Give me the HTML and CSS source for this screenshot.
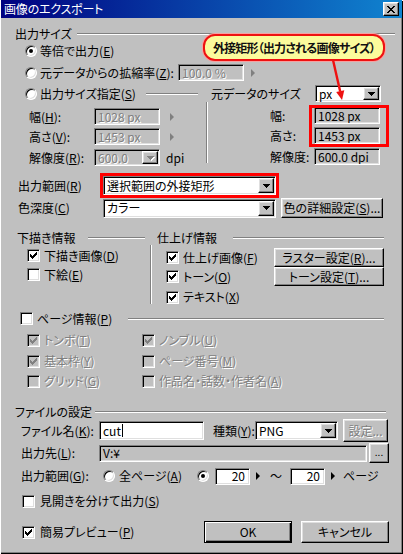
FILE: index.html
```html
<!DOCTYPE html>
<html lang="ja">
<head>
<meta charset="utf-8">
<title>画像のエクスポート</title>
<link rel="stylesheet" href="styles.css">
</head>
<body>
<div class="window">
  <div class="titlebar">
    <span class="title">画像のエクスポート</span>
    <span class="closebtn raised"><svg class="xicon" width="8" height="7" viewBox="0 0 8 7"><path d="M0 0h2v1H0zM6 0h2v1H6zM1 1h2v1H1zM5 1h2v1H5zM2 2h4v1H2zM3 3h2v1H3zM2 4h4v1H2zM1 5h2v1H1zM5 5h2v1H5zM0 6h2v1H0zM6 6h2v1H6z"/></svg></span>
  </div>

  <div class="content">
    <div class="row r-head1"><span class="gl gl-size">出力サイズ</span><span class="etch"></span></div>

    <div class="row r-radio1"><span class="radio on"></span><span class="rl">等倍で出力(<u>E</u>)</span></div>

    <div class="row r-radio2">
      <span class="radio"></span><span class="rl lab-scale">元データからの拡縮率(<u>Z</u>):</span>
      <span class="field sunken dis w-66 h-17">100.0 %</span>
      <span class="tri tri-dis tri-scale"></span>
    </div>

    <div class="row r-row3">
      <span class="radio"></span><span class="rl lab-spec">出力サイズ指定(<u>S</u>)</span>
      <span class="etch etch-spec"></span>
      <span class="lab-orig">元データのサイズ</span>
      <span class="combo sunken w-66 h-17"><span class="ctext">px</span><span class="cbtn raised"><svg class="dda" width="7" height="4" viewBox="0 0 7 4"><path d="M0 0h7v1H0zM1 1h5v1H1zM2 2h3v1H2zM3 3h1v1H3z"/></svg></span></span>
    </div>

    <div class="sub">
      <div class="sub-left">
        <div class="row srow s1"><span class="slab">幅(<u>H</u>):</span><span class="field sunken dis w-66 h-17">1028 px</span><span class="tri tri-dis tri-sub"></span></div>
        <div class="row srow s2"><span class="slab">高さ(<u>V</u>):</span><span class="field sunken dis w-66 h-17">1453 px</span><span class="tri tri-dis tri-sub"></span></div>
        <div class="row srow s3"><span class="slab">解像度(<u>R</u>):</span><span class="combo sunken dis w-66 h-17"><span class="ctext">600.0</span><span class="cbtn raised"><svg class="dda" width="7" height="4" viewBox="0 0 7 4"><path d="M0 0h7v1H0zM1 1h5v1H1zM2 2h3v1H2zM3 3h1v1H3z"/></svg></span></span><span class="dpi">dpi</span></div>
      </div>
      <div class="vline vline-sub"></div>
      <div class="sub-right">
        <div class="row srow s1r"><span class="rlab">幅:</span><span class="field sunken ro w-66 h-17">1028 px</span></div>
        <div class="row srow s2"><span class="rlab">高さ:</span><span class="field sunken ro w-66 h-17">1453 px</span></div>
        <div class="row srow s3"><span class="rlab">解像度:</span><span class="field sunken ro w-66 h-17">600.0 dpi</span></div>
      </div>
    </div>

    <div class="row r-range">
      <span class="lab-range">出力範囲(<u>R</u>)</span>
      <span class="redbox"><span class="combo sunken w-173 h-19"><span class="ctext">選択範囲の外接矩形</span><span class="cbtn raised"><svg class="dda" width="7" height="4" viewBox="0 0 7 4"><path d="M0 0h7v1H0zM1 1h5v1H1zM2 2h3v1H2zM3 3h1v1H3z"/></svg></span></span></span>
    </div>

    <div class="row r-depth">
      <span class="lab-depth">色深度(<u>C</u>)</span>
      <span class="combo sunken w-173 h-19"><span class="ctext">カラー</span><span class="cbtn raised"><svg class="dda" width="7" height="4" viewBox="0 0 7 4"><path d="M0 0h7v1H0zM1 1h5v1H1zM2 2h3v1H2zM3 3h1v1H3z"/></svg></span></span>
      <span class="btn raised btn-color">色の詳細設定(<u>S</u>)...</span>
    </div>

    <div class="row r-head2">
      <span class="gl gl-draft">下描き情報</span><span class="etch etch-draft"></span>
      <span class="gl gl-fin">仕上げ情報</span><span class="etch"></span>
    </div>

    <div class="block2">
      <div class="b2-left">
        <div class="row crow"><span class="chk"><svg class="ck" width="7" height="7" viewBox="0 0 7 7"><path d="M6 0h1v1H6zM5 1h2v1H5zM0 2h1v1H0zM4 2h3v1H4zM0 3h2v1H0zM3 3h3v1H3zM0 4h5v1H0zM1 5h3v1H1zM2 6h1v1H2z"/></svg></span><span class="cl">下描き画像(<u>D</u>)</span></div>
        <div class="row crow"><span class="chk"></span><span class="cl">下絵(<u>E</u>)</span></div>
      </div>
      <div class="vline vline-b2"></div>
      <div class="b2-right">
        <div class="row crow"><span class="chk"><svg class="ck" width="7" height="7" viewBox="0 0 7 7"><path d="M6 0h1v1H6zM5 1h2v1H5zM0 2h1v1H0zM4 2h3v1H4zM0 3h2v1H0zM3 3h3v1H3zM0 4h5v1H0zM1 5h3v1H1zM2 6h1v1H2z"/></svg></span><span class="cl lab-fin">仕上げ画像(<u>F</u>)</span><span class="btn raised btn-set">ラスター設定(<u>R</u>)...</span></div>
        <div class="row crow"><span class="chk"><svg class="ck" width="7" height="7" viewBox="0 0 7 7"><path d="M6 0h1v1H6zM5 1h2v1H5zM0 2h1v1H0zM4 2h3v1H4zM0 3h2v1H0zM3 3h3v1H3zM0 4h5v1H0zM1 5h3v1H1zM2 6h1v1H2z"/></svg></span><span class="cl lab-fin">トーン(<u>O</u>)</span><span class="btn raised btn-set">トーン設定(<u>T</u>)...</span></div>
        <div class="row crow crow-text"><span class="chk"><svg class="ck" width="7" height="7" viewBox="0 0 7 7"><path d="M6 0h1v1H6zM5 1h2v1H5zM0 2h1v1H0zM4 2h3v1H4zM0 3h2v1H0zM3 3h3v1H3zM0 4h5v1H0zM1 5h3v1H1zM2 6h1v1H2z"/></svg></span><span class="cl">テキスト(<u>X</u>)</span></div>
      </div>
    </div>

    <div class="row r-page"><span class="chk"></span><span class="cl lab-page">ページ情報(<u>P</u>)</span><span class="etch"></span></div>

    <div class="row r-dis r-dis1">
      <span class="chk dis"><svg class="ck" width="7" height="7" viewBox="0 0 7 7"><path d="M6 0h1v1H6zM5 1h2v1H5zM0 2h1v1H0zM4 2h3v1H4zM0 3h2v1H0zM3 3h3v1H3zM0 4h5v1H0zM1 5h3v1H1zM2 6h1v1H2z"/></svg></span><span class="cl dtext lab-dis">トンボ(<u>T</u>)</span>
      <span class="chk dis"><svg class="ck" width="7" height="7" viewBox="0 0 7 7"><path d="M6 0h1v1H6zM5 1h2v1H5zM0 2h1v1H0zM4 2h3v1H4zM0 3h2v1H0zM3 3h3v1H3zM0 4h5v1H0zM1 5h3v1H1zM2 6h1v1H2z"/></svg></span><span class="cl dtext">ノンブル(<u>U</u>)</span>
    </div>
    <div class="row r-dis r-dis2">
      <span class="chk dis"><svg class="ck" width="7" height="7" viewBox="0 0 7 7"><path d="M6 0h1v1H6zM5 1h2v1H5zM0 2h1v1H0zM4 2h3v1H4zM0 3h2v1H0zM3 3h3v1H3zM0 4h5v1H0zM1 5h3v1H1zM2 6h1v1H2z"/></svg></span><span class="cl dtext lab-dis">基本枠(<u>Y</u>)</span>
      <span class="chk dis"></span><span class="cl dtext">ページ番号(<u>M</u>)</span>
    </div>
    <div class="row r-dis r-dis3">
      <span class="chk dis"></span><span class="cl dtext lab-dis">グリッド(<u>G</u>)</span>
      <span class="chk dis"></span><span class="cl dtext">作品名・話数・作者名(<u>A</u>)</span>
    </div>

    <div class="row r-head3"><span class="gl gl-file">ファイルの設定</span><span class="etch"></span></div>

    <div class="row r-file">
      <span class="flab">ファイル名(<u>K</u>):</span>
      <span class="field sunken w-105 h-19">cut<span class="caret"></span></span>
      <span class="lab-type">種類(<u>Y</u>):</span>
      <span class="combo sunken w-83 h-19"><span class="ctext">PNG</span><span class="cbtn raised"><svg class="dda" width="7" height="4" viewBox="0 0 7 4"><path d="M0 0h7v1H0zM1 1h5v1H1zM2 2h3v1H2zM3 3h1v1H3z"/></svg></span></span>
      <span class="btn raised btn-opt dtext">設定...</span>
    </div>

    <div class="row r-dest">
      <span class="flab">出力先(<u>L</u>):</span>
      <span class="field sunken ro w-268 h-17">V:¥</span>
      <span class="btn raised btn-browse">...</span>
    </div>

    <div class="row r-grange">
      <span class="glab">出力範囲(<u>G</u>):</span>
      <span class="radio"></span><span class="rl lab-all">全ページ(<u>A</u>)</span>
      <span class="radio on"></span>
      <span class="field sunken num w-35 h-17 f-from">20</span>
      <span class="tri tri-g"></span>
      <span class="tilde">～</span>
      <span class="field sunken num w-35 h-17">20</span>
      <span class="tri tri-g"></span>
      <span class="lab-pages">ページ</span>
    </div>

    <div class="row r-spread"><span class="chk"></span><span class="cl cl-b">見開きを分けて出力(<u>S</u>)</span></div>

    <div class="row r-bottom">
      <span class="chk"><svg class="ck" width="7" height="7" viewBox="0 0 7 7"><path d="M6 0h1v1H6zM5 1h2v1H5zM0 2h1v1H0zM4 2h3v1H4zM0 3h2v1H0zM3 3h3v1H3zM0 4h5v1H0zM1 5h3v1H1zM2 6h1v1H2z"/></svg></span><span class="cl cl-b lab-preview">簡易プレビュー(<u>P</u>)</span>
      <span class="btn btn-default btn-ok">OK</span>
      <span class="btn raised btn-cancel">キャンセル</span>
    </div>
  </div>

  <div class="redrect"></div>
  <div class="callout">外接矩形（出力される画像サイズ）</div>
  <svg class="callout-arrow" width="24" height="46" viewBox="0 0 24 46"><line x1="7" y1="2" x2="14.2" y2="33.5" stroke="#ee1111" stroke-width="2.4"/><path d="M16 42L18.3 32.2L10.2 33.9z" fill="#ee1111"/></svg>
</div>
</body>
</html>
```

FILE: styles.css
```css
* { box-sizing: border-box; }
html, body { margin: 0; padding: 0; background: #c0c0c0; }
body { width: 403px; height: 554px; overflow: hidden; }

.window {
  position: relative;
  width: 403px;
  height: 554px;
  background: #c0c0c0;
  box-shadow: inset 1px 1px #fff, inset -1px -1px #000, inset -2px -2px #808080;
  font: 12px/14px "Noto Sans CJK JP", "Noto Sans", sans-serif;
  font-feature-settings: "palt";
  color: #000;
  overflow: hidden;
}

u { text-decoration: underline; text-underline-offset: 1px; }

/* title bar */
.titlebar {
  display: flex;
  align-items: center;
  justify-content: space-between;
  height: 18px;
  margin: 0 1px;
  padding-left: 3px;
  background: linear-gradient(to right, #000080, #1084d0);
  color: #fff;
}
.title { font-size: 12px; letter-spacing: -0.2px; }
.closebtn {
  display: flex;
  align-items: center;
  justify-content: center;
  width: 16px;
  height: 14px;
  margin-right: 3px;
}
.xicon { fill: #000; display: block; }

/* 3D primitives */
.raised {
  background: #c0c0c0;
  border: 1px solid;
  border-color: #fff #000 #000 #fff;
  box-shadow: inset -1px -1px #808080, inset 1px 1px #dfdfdf;
}
.sunken {
  border: 1px solid;
  border-color: #808080 #fff #fff #808080;
  box-shadow: inset 1px 1px #000, inset -1px -1px #dfdfdf;
}

.row { display: flex; align-items: center; white-space: nowrap; }

.etch {
  flex: 1;
  height: 2px;
  border-top: 1px solid #808080;
  border-bottom: 1px solid #fff;
}
.vline {
  width: 2px;
  border-left: 1px solid #808080;
  border-right: 1px solid #fff;
  flex: none;
}

.radio {
  flex: none;
  position: relative;
  width: 12px;
  height: 12px;
  border-radius: 50%;
  background: #fff;
  border: 1px solid;
  border-color: #808080 #fff #fff #808080;
  box-shadow: inset 1px 1px #000, inset -1px -1px #dfdfdf;
}
.radio.on::after {
  content: "";
  position: absolute;
  left: 3px;
  top: 3px;
  width: 4px;
  height: 4px;
  border-radius: 50%;
  background: #000;
}
.rl { margin-left: 3px; }

.chk {
  flex: none;
  display: flex;
  align-items: center;
  justify-content: center;
  width: 13px;
  height: 13px;
  background: #fff;
  border: 1px solid;
  border-color: #808080 #fff #fff #808080;
  box-shadow: inset 1px 1px #000, inset -1px -1px #dfdfdf;
}
.ck { display: block; fill: #000; }
.chk.dis { background: #c0c0c0; }
.chk.dis .ck { fill: #808080; }
.cl { margin-left: 4px; }
.cl-b { margin-left: 5px; }

.dtext, .dis { color: #808080; text-shadow: 1px 1px 0 #fff; }
.dtext u { text-decoration-color: #808080; }

.field {
  flex: none;
  display: flex;
  align-items: center;
  padding: 0 3px;
  line-height: 12px;
  background: #fff;
  overflow: hidden;
}
.field.dis, .field.ro { background: #c0c0c0; }
.field.num { justify-content: flex-end; padding-right: 4px; }

.combo {
  flex: none;
  display: flex;
  align-items: stretch;
  padding: 1px;
  background: #fff;
}
.combo.dis { background: #c0c0c0; }
.ctext { flex: 1; display: flex; align-items: center; padding-left: 2px; line-height: 12px; }
.cbtn {
  flex: none;
  width: 16px;
  display: flex;
  align-items: center;
  justify-content: center;
  text-shadow: none;
}
.dda { display: block; fill: #000; }
.combo.dis .dda { fill: #808080; filter: drop-shadow(1px 1px 0 #fff); }

.btn {
  flex: none;
  display: flex;
  align-items: center;
  justify-content: center;
}
.btn-default {
  background: #c0c0c0;
  border: 1px solid #000;
  box-shadow: inset 1px 1px #fff, inset -1px -1px #000, inset -2px -2px #808080;
}

.tri {
  flex: none;
  width: 0;
  height: 0;
  border-left: 4px solid #000;
  border-top: 4px solid transparent;
  border-bottom: 4px solid transparent;
}
.tri-dis { border-left-color: #808080; }

/* sizes */
.w-66 { width: 66px; }
.w-173 { width: 173px; }
.w-105 { width: 105px; }
.w-83 { width: 83px; }
.w-268 { width: 268px; }
.w-35 { width: 35px; }
.h-17 { height: 17px; }
.h-19 { height: 19px; }

/* section: 出力サイズ */
.r-head1 { margin-top: 9px; height: 14px; padding-left: 15px; padding-right: 8px; }
.gl-size { width: 62px; }
.r-radio1 { margin-top: 1px; height: 17px; padding-left: 25px; }
.r-radio2 { margin-top: 5px; height: 17px; padding-left: 25px; }
.lab-scale { width: 138px; }
.tri-scale { margin-left: 7px; }
.r-row3 { margin-top: 4px; height: 17px; padding-left: 25px; }
.lab-spec { width: 106px; }
.etch-spec { flex: none; width: 52px; margin-right: 13px; }
.lab-orig { width: 104px; }

.sub { display: flex; height: 64px; }
.sub-left { width: 206px; padding-left: 29px; padding-top: 6px; }
.sub-right { padding-left: 62px; padding-top: 5px; }
.vline-sub { height: 61px; }
.srow { height: 17px; }
.s2 { margin-top: 3px; }
.s3 { margin-top: 4px; }
.slab { width: 65px; }
.rlab { width: 44px; }
.tri-sub { margin-left: 10px; }
.dpi { margin-left: 6px; }

.r-range { margin-top: 7px; height: 25px; padding-left: 18px; }
.lab-range { width: 82px; }
.redbox { flex: none; display: flex; border: 3px solid #ff0000; }

.r-depth { height: 20px; padding-left: 18px; }
.lab-depth { width: 85px; }
.btn-color { width: 102px; height: 20px; margin-left: 5px; }

/* section: 下描き / 仕上げ */
.r-head2 { margin-top: 13px; height: 14px; padding-left: 17px; padding-right: 19px; }
.gl-draft { width: 71px; }
.etch-draft { flex: none; width: 57px; margin-right: 12px; }
.gl-fin { width: 76px; }

.block2 { display: flex; height: 62px; }
.b2-left { width: 150px; padding-left: 27px; padding-top: 1px; }
.vline-b2 { height: 59px; }
.b2-right { padding-left: 14px; padding-top: 3px; }
.crow { height: 19px; }
.crow-text { margin-top: 2px; height: 18px; }
.lab-fin { width: 91px; }
.btn-set { width: 110px; height: 19px; }

.r-page { margin-top: 4px; height: 15px; padding-left: 20px; padding-right: 19px; }
.lab-page { width: 91px; }

.r-dis { height: 20px; padding-left: 27px; }
.r-dis1 { margin-top: 4px; }
.r-dis2 { margin-top: 1px; }
.lab-dis { width: 98px; }

/* section: ファイルの設定 */
.r-head3 { margin-top: 14px; height: 14px; padding-left: 15px; padding-right: 17px; }
.gl-file { width: 80px; }

.r-file { height: 23px; padding-left: 21px; }
.flab { width: 78px; }
.caret { display: inline-block; width: 1px; height: 13px; background: #000; margin-left: 1px; }
.lab-type { width: 42px; margin-left: 9px; }
.btn-opt { width: 45px; height: 23px; margin-left: 5px; }

.r-dest { margin-top: 1px; height: 20px; padding-left: 21px; }
.btn-browse { width: 20px; height: 20px; margin-left: 2px; font-size: 10px; line-height: 10px; padding-bottom: 2px; }

.r-grange { margin-top: 4px; height: 18px; padding-left: 21px; }
.glab { width: 82px; }
.lab-all { width: 78px; margin-left: 4px; }
.f-from { margin-left: 6px; }
.tri-g { margin-left: 6px; }
.tilde { width: 20px; margin-left: 10px; }
.lab-pages { margin-left: 8px; }

.r-spread { margin-top: 9px; height: 14px; padding-left: 22px; }

.r-bottom { margin-top: 13px; height: 22px; padding-left: 22px; }
.lab-preview { width: 164px; }
.btn-ok { width: 88px; height: 22px; }
.btn-cancel { width: 88px; height: 22px; margin-left: 9px; }

/* annotations over the dialog */
.redrect {
  position: absolute;
  left: 309px;
  top: 105px;
  width: 80px;
  height: 42px;
  border: 3px solid #ff0000;
}
.callout {
  position: absolute;
  left: 203px;
  top: 34px;
  width: 182px;
  height: 27px;
  display: flex;
  align-items: center;
  justify-content: center;
  background: #fbfb9c;
  border: 2px solid #ee1111;
  border-radius: 12px;
  box-shadow: 0 0 0 1px #f6a0a0;
  font-weight: bold;
  font-size: 12px;
  letter-spacing: -0.8px;
  color: #111;
  white-space: nowrap;
}
.callout-arrow {
  position: absolute;
  left: 326px;
  top: 58px;
}
```
